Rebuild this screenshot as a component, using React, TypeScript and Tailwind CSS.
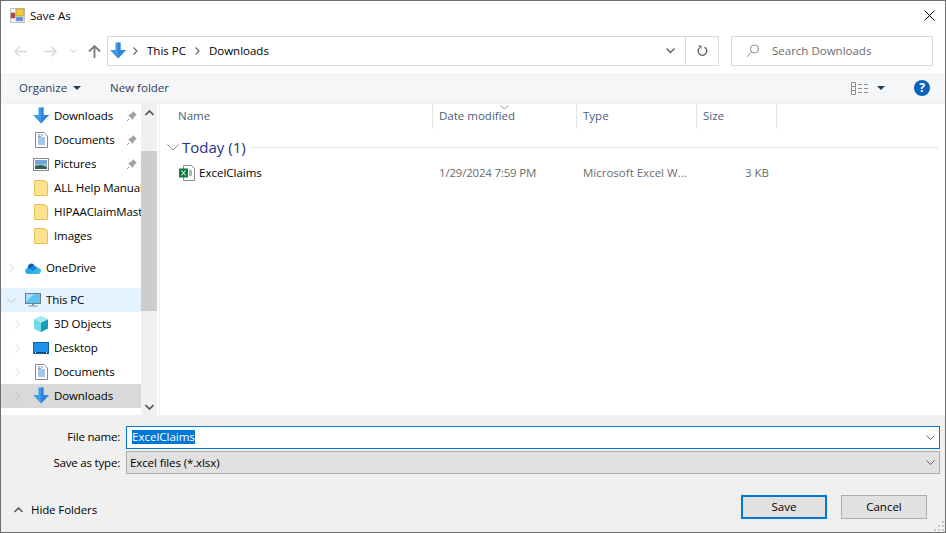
import type { ReactNode } from 'react';

const DownloadIcon = () => (
  <svg width="16" height="18" viewBox="0 0 16 18">
    <path d="M5.5 0.5h5V8H16L8 16.5 0 8h5.5z" fill="#3f9ae8" />
    <path d="M8 0.5h2.5V8H16L8 16.5z" fill="#2f86d8" />
  </svg>
);

const DocIcon = () => (
  <svg width="13" height="16" viewBox="0 0 13 16">
    <path d="M.5.5h8.5l3.5 3.5v11.500H.5z" fill="#fff" stroke="#8a8a8a" />
    <path d="M3 3h2M6 3h2M3 6h7M3 8h7M3 10h7M3 12h7" stroke="#4a8fd0" strokeWidth="1" />
    <path d="M3 4h3v1H3z" fill="#9a9a9a" />
  </svg>
);

const PicturesIcon = () => (
  <svg width="16" height="13" viewBox="0 0 16 13">
    <rect x=".5" y=".5" width="15" height="12" fill="#fff" stroke="#8a8a8a" />
    <rect x="2" y="2" width="12" height="4" fill="#6ea6d8" />
    <path d="M2 6h12v5H2z" fill="#9fc0c0" />
    <path d="M2 8l6-1 6 2v2H2z" fill="#2f5f57" />
  </svg>
);

const FolderIcon = () => (
  <svg width="14" height="16" viewBox="0 0 14 16">
    <path d="M.5.5h9l4 2v13H.5z" fill="#fde38f" stroke="#e8c34c" />
    <path d="M9.5.5v2h4" fill="#f5cf5e" />
  </svg>
);

const OneDriveIcon = () => (
  <svg width="16" height="11" viewBox="0 0 16 11">
    <path d="M3 5a3.500 3.500 0 0 1 6.500-2.500L5 8H3z" fill="#0f5fb5" />
    <path d="M6 4.500a4 4 0 0 1 6.500 0.500L8 9 4 6z" fill="#1583d8" />
    <path d="M3.500 11A3 3 0 0 1 3 5l3 1.500 3 2L12 11z" fill="#28a8ea" />
    <path d="M5 11l7-6a3 3 0 0 1 3 5c-.5.7-1 1-2 1z" fill="#34b5f0" />
  </svg>
);

const PcIcon = () => (
  <svg width="16" height="14" viewBox="0 0 16 14">
    <rect x=".5" y=".5" width="15" height="10" fill="#5fc3f1" stroke="#6f7f8a" />
    <path d="M1 1h8L1 9z" fill="#a5e2fa" />
    <path d="M7 11h2v1.500H7z" fill="#8a8a8a" />
    <path d="M3.500 13h9" stroke="#8a8a8a" />
  </svg>
);

const CubeIcon = () => (
  <svg width="16" height="16" viewBox="0 0 16 16">
    <path d="M8 0l7 3.500v9L8 16 1 12.500v-9z" fill="#3cc5d8" />
    <path d="M1 3.500L8 0l7 3.500L8 7z" fill="#a9eaf1" />
    <path d="M8 7l7-3.500v9L8 16z" fill="#1a9bb5" />
    <path d="M1 3.500L8 7v9l-7-3.500z" fill="#6fdce6" />
  </svg>
);

const DesktopIcon = () => (
  <svg width="16" height="12" viewBox="0 0 16 12">
    <rect x=".5" y=".5" width="15" height="11" fill="#1e90e6" stroke="#0d5ea8" />
    <path d="M1 10h14v1H1z" fill="#0a3f78" />
    <path d="M2 10.500h1M13 10.500h1" stroke="#fff" />
  </svg>
);

const Chev = ({ dir = 'right', color = '#e6e6e6' }: { dir?: 'right' | 'down'; color?: string }) => (
  <svg width="9" height="9" viewBox="0 0 9 9">
    {dir === 'right' ? (
      <path d="M2.500 .5l4 4-4 4" fill="none" stroke={color} strokeWidth="1.200" />
    ) : (
      <path d="M.5 2.500l4 4 4-4" fill="none" stroke={color} strokeWidth="1.200" />
    )}
  </svg>
);

const Pin = () => (
  <svg width="12" height="12" viewBox="0 0 12 12">
    <path d="M7 1l4 4-1.500.5L7.500 8 7 10 2 5l2-.5L6.500 2.500z" fill="#a0a0a0" />
    <path d="M3.500 8.500L1 11" stroke="#a0a0a0" />
  </svg>
);

function NavRow({
  icon,
  label,
  child,
  pin,
  bg,
  chevron,
  className = '',
}: {
  icon: ReactNode;
  label: string;
  child?: boolean;
  pin?: boolean;
  bg?: string;
  chevron?: ReactNode;
  className?: string;
}) {
  return (
    <div className={`flex h-6 shrink-0 items-center ${bg ?? ''} ${className}`}>
      <span className={`flex shrink-0 justify-center ${child ? 'w-[32px] pl-[4px] pr-[4px]' : 'w-[24px] pr-[4px]'}`}>{chevron}</span>
      <span className="flex w-[16px] shrink-0 justify-center">{icon}</span>
      <span className="ml-[5px] overflow-hidden whitespace-nowrap tracking-[-0.1px] text-black">{label}</span>
      {pin && <span className="ml-auto mr-[3px] shrink-0"><Pin /></span>}
    </div>
  );
}

const Column = ({ label, className }: { label: string; className: string }) => (
  <div className={`flex h-[25px] shrink-0 items-center border-r border-[#e5e5e5] pb-[2px] text-[#4c607a] ${className}`}>{label}</div>
);

export default function App() {
  return (
    <div className="flex h-[533px] w-[946px] flex-col overflow-hidden border border-[#6e6e6e] bg-white font-['Open_Sans',sans-serif] text-[11.5px] text-black">
      {/* title bar */}
      <div className="flex h-[29px] shrink-0 items-center">
        <svg className="ml-[9px]" width="15" height="15" viewBox="0 0 15 15">
          <rect x=".5" y=".5" width="14" height="14" fill="#f2f2f2" stroke="#c4c4c4" />
          <rect x="6" y="1" width="8" height="7" fill="#f5c93e" stroke="#b08a20" strokeWidth=".6" />
          <rect x="1" y="5" width="4" height="5" fill="#c8362e" stroke="#7a7a7a" strokeWidth=".6" />
          <rect x="6" y="9" width="7" height="4" fill="#5b8fdc" stroke="#9ab0d0" strokeWidth=".6" />
        </svg>
        <span className="ml-[5px]">Save As</span>
        <svg className="ml-auto mr-[10px]" width="11" height="11" viewBox="0 0 11 11">
          <path d="M.5.5l10 10M10.500.5l-10 10" stroke="#000" strokeWidth="1" />
        </svg>
      </div>

      {/* navigation row */}
      <div className="flex h-[43px] shrink-0 items-start pt-[6px]">
        <div className="flex h-[30px] w-[106px] shrink-0 items-center">
          <svg className="ml-[13px]" width="13" height="11" viewBox="0 0 13 11">
            <path d="M6 .5L1 5.500l5 5M1 5.500h12" fill="none" stroke="#d9d9d9" strokeWidth="1.500" />
          </svg>
          <svg className="ml-[17px]" width="13" height="11" viewBox="0 0 13 11">
            <path d="M7 .5l5 5-5 5M12 5.500H0" fill="none" stroke="#d9d9d9" strokeWidth="1.500" />
          </svg>
          <svg className="ml-[13px]" width="7" height="5" viewBox="0 0 7 5">
            <path d="M.5.5l3 3 3-3" fill="none" stroke="#d9d9d9" strokeWidth="1.200" />
          </svg>
          <svg className="ml-[11px]" width="13" height="13" viewBox="0 0 13 13">
            <path d="M1 6.500l5.500-5.500 5.500 5.500M6.500 1v12" fill="none" stroke="#7a7a7a" strokeWidth="1.800" />
          </svg>
        </div>
        <div className="flex h-[30px] w-[612px] shrink-0 items-center border border-[#d9d9d9]">
          <span className="ml-[2px] flex"><DownloadIcon /></span>
          <svg className="ml-[7px]" width="5" height="8" viewBox="0 0 5 8">
            <path d="M.5.5l3.500 3.500-3.500 3.500" fill="none" stroke="#6a6a6a" strokeWidth="1.200" />
          </svg>
          <span className="ml-[9px]">This PC</span>
          <svg className="ml-[9px]" width="5" height="8" viewBox="0 0 5 8">
            <path d="M.5.5l3.500 3.500-3.500 3.500" fill="none" stroke="#6a6a6a" strokeWidth="1.200" />
          </svg>
          <span className="ml-[9px]">Downloads</span>
          <svg className="ml-auto mr-[10px]" width="9" height="6" viewBox="0 0 9 6">
            <path d="M.5.5l4 4 4-4" fill="none" stroke="#6a6a6a" strokeWidth="1.500" />
          </svg>
          <div className="flex h-full w-[33px] items-center justify-center border-l border-[#d9d9d9]">
            <svg width="11" height="12" viewBox="0 0 11 12">
              <path d="M7.500 2.200A4.300 4.300 0 1 1 2.500 2.800" fill="none" stroke="#6a6a6a" strokeWidth="1.400" />
              <path d="M1 .5h3.500V4z" fill="#6a6a6a" />
            </svg>
          </div>
        </div>
        <div className="ml-[12px] flex h-[30px] w-[202px] shrink-0 items-center border border-[#d9d9d9] text-[#6d6d6d]">
          <svg className="ml-[14px]" width="14" height="14" viewBox="0 0 14 14">
            <circle cx="8.500" cy="5" r="4" fill="none" stroke="#8a8a8a" />
            <path d="M5.500 8L1 13" stroke="#b08a8a" />
          </svg>
          <span className="ml-[12px]">Search Downloads</span>
        </div>
      </div>

      {/* toolbar */}
      <div className="flex h-[30px] shrink-0 items-center bg-[#f5f6f7] text-[#2a3f5f]">
        <span className="ml-[18px]">Organize</span>
        <svg className="ml-[6px]" width="8" height="4" viewBox="0 0 8 4"><path d="M0 0h8L4 4z" fill="#1f3a5f" /></svg>
        <span className="ml-[29px]">New folder</span>
        <svg className="ml-auto" width="17" height="13" viewBox="0 0 17 13">
          <path d="M.5.5h4v4h-4zM.5 4.500h4v4h-4zM.5 8.500h4v4h-4z" fill="none" stroke="#8f8f8f" />
          <path d="M7 2.500h4M13 2.500h4M7 6.500h4M13 6.500h4M7 10.500h4M13 10.500h4" stroke="#8f8f8f" />
        </svg>
        <svg className="ml-[9px]" width="8" height="4" viewBox="0 0 8 4"><path d="M0 0h8L4 4z" fill="#1f3a5f" /></svg>
        <div className="ml-[29px] mr-[15px] flex h-4 w-4 items-center justify-center rounded-full bg-[#0a62bd] text-[12px] font-bold leading-none text-white">?</div>
      </div>
      <div className="h-px shrink-0 bg-[#f0f0f0]" />

      {/* body */}
      <div className="flex min-h-0 flex-1">
        {/* folder tree */}
        <div className="flex w-[140px] shrink-0 flex-col overflow-hidden">
          <NavRow child icon={<DownloadIcon />} label="Downloads" pin />
          <NavRow child icon={<DocIcon />} label="Documents" pin />
          <NavRow child icon={<PicturesIcon />} label="Pictures" pin />
          <NavRow child icon={<FolderIcon />} label="ALL Help Manuals" />
          <NavRow child icon={<FolderIcon />} label="HIPAAClaimMaster" />
          <NavRow child icon={<FolderIcon />} label="Images" />
          <NavRow className="mt-2" icon={<OneDriveIcon />} label="OneDrive" chevron={<Chev />} />
          <NavRow className="mt-2" bg="bg-[#e5f3ff]" icon={<PcIcon />} label="This PC" chevron={<Chev dir="down" color="#c8d4dc" />} />
          <NavRow child icon={<CubeIcon />} label="3D Objects" chevron={<Chev />} />
          <NavRow child icon={<DesktopIcon />} label="Desktop" chevron={<Chev />} />
          <NavRow child icon={<DocIcon />} label="Documents" chevron={<Chev />} />
          <NavRow child bg="bg-[#d9d9d9]" icon={<DownloadIcon />} label="Downloads" chevron={<Chev color="#c4c4c4" />} />
          <NavRow child icon={<span className="mt-[10px] h-[7px] w-[2px] bg-[#3a8fdc]" />} label="" />
        </div>

        {/* scrollbar */}
        <div className="flex w-[16px] shrink-0 flex-col bg-[#f0f0f0]">
          <div className="flex h-[17px] shrink-0 items-center justify-center">
            <svg width="9" height="6" viewBox="0 0 9 6"><path d="M.5 5l4-4 4 4" fill="none" stroke="#505050" strokeWidth="1.600" /></svg>
          </div>
          <div className="mt-[30px] h-[160px] shrink-0 bg-[#cdcdcd]" />
          <div className="mt-auto flex h-[17px] shrink-0 items-center justify-center">
            <svg width="9" height="6" viewBox="0 0 9 6"><path d="M.5 1l4 4 4-4" fill="none" stroke="#505050" strokeWidth="1.600" /></svg>
          </div>
        </div>
        <div className="ml-[2px] w-px shrink-0 bg-[#f0f0f0]" />

        {/* file list */}
        <div className="relative min-w-0 flex-1">
          <div className="flex">
            <Column label="Name" className="w-[273px] pl-[18px]" />
            <Column label="Date modified" className="w-[144px] pl-[6px]" />
            <Column label="Type" className="w-[120px] pl-[6px]" />
            <Column label="Size" className="w-[80px] pl-[6px]" />
          </div>
          <svg className="absolute left-[340px] top-[1px]" width="9" height="5" viewBox="0 0 9 5">
            <path d="M.5.5l4 3.500 4-3.500" fill="none" stroke="#9a9a9a" />
          </svg>

          <div className="mt-[6px] flex h-[24px] items-center">
            <svg className="ml-[7px]" width="12" height="7" viewBox="0 0 12 7">
              <path d="M.5.5L6 6l5.500-5.500" fill="none" stroke="#8a8a8a" />
            </svg>
            <span className="ml-[3px] whitespace-nowrap text-[15px] text-[#1e3287]">Today (1)</span>
            <div className="ml-[5px] mr-[7px] h-px flex-1 bg-[#e5e5e5]" />
          </div>

          <div className="mt-[2px] flex h-[24px] items-center">
            <svg className="ml-[19px]" width="16" height="16" viewBox="0 0 16 16">
              <path d="M4.500.5h8l3 3v12h-11z" fill="#fff" stroke="#8a8a8a" />
              <path d="M10 6h3M10 8h3M10 10h3" stroke="#4a7a5a" />
              <rect x="0" y="3.500" width="9" height="9" fill="#107c41" />
              <path d="M2.500 5.500l4 5M6.500 5.500l-4 5" stroke="#fff" />
            </svg>
            <span className="ml-[4px] w-[240px]">ExcelClaims</span>
            <span className="w-[144px] tracking-[-0.2px] text-[#6d6d6d]">1/29/2024 7:59 PM</span>
            <span className="w-[110px] overflow-hidden whitespace-nowrap text-[#6d6d6d]">Microsoft Excel W...</span>
            <span className="w-[76px] text-right text-[#6d6d6d]">3 KB</span>
          </div>
        </div>
      </div>

      {/* save panel */}
      <div className="relative flex h-[117px] shrink-0 flex-col bg-[#f0f0f0]">
        <div className="mt-[11px] flex h-[23px] items-center pr-[5px]">
          <label className="w-[119px] shrink-0 pb-[2px] text-right tracking-[-0.2px]">File name:</label>
          <div className="ml-[6px] flex h-full flex-1 items-center border border-[#0078d7] bg-white">
            <span className="mb-[1px] ml-[5px] bg-[#0078d7] leading-[14px] text-white">ExcelClaims</span>
            <svg className="ml-auto mr-[4px]" width="9" height="6" viewBox="0 0 9 6">
              <path d="M.5.5l4 4 4-4" fill="none" stroke="#606060" />
            </svg>
          </div>
        </div>
        <div className="mt-[2px] flex h-[23px] items-center pr-[5px]">
          <label className="w-[119px] shrink-0 text-right tracking-[-0.2px]">Save as type:</label>
          <div className="ml-[6px] flex h-full flex-1 items-center border border-[#adadad] bg-[#e1e1e1]">
            <span className="ml-[3px] tracking-[-0.1px]">Excel files (*.xlsx)</span>
            <svg className="ml-auto mr-[4px]" width="9" height="6" viewBox="0 0 9 6">
              <path d="M.5.5l4 4 4-4" fill="none" stroke="#606060" />
            </svg>
          </div>
        </div>

        <div className="mt-[21px] flex items-center">
          <svg className="ml-[13px] mt-[5px]" width="9" height="6" viewBox="0 0 9 6">
            <path d="M.5 5l4-4 4 4" fill="none" stroke="#505050" strokeWidth="1.500" />
          </svg>
          <span className="ml-[8px] mt-[5px] tracking-[-0.1px]">Hide Folders</span>
          <button className="ml-auto h-6 w-[86px] border-2 border-[#0078d7] bg-[#e1e1e1]">Save</button>
          <button className="ml-[14px] mr-[18px] h-6 w-[86px] border border-[#adadad] bg-[#e1e1e1]">Cancel</button>
        </div>

        <svg className="absolute bottom-[1px] right-[1px]" width="10" height="10" viewBox="0 0 10 10">
          <path d="M8 0h2v2H8zM4 4h2v2H4zM8 4h2v2H8zM0 8h2v2H0zM4 8h2v2H4zM8 8h2v2H8z" fill="#c4c4c4" />
        </svg>
      </div>
    </div>
  );
}
